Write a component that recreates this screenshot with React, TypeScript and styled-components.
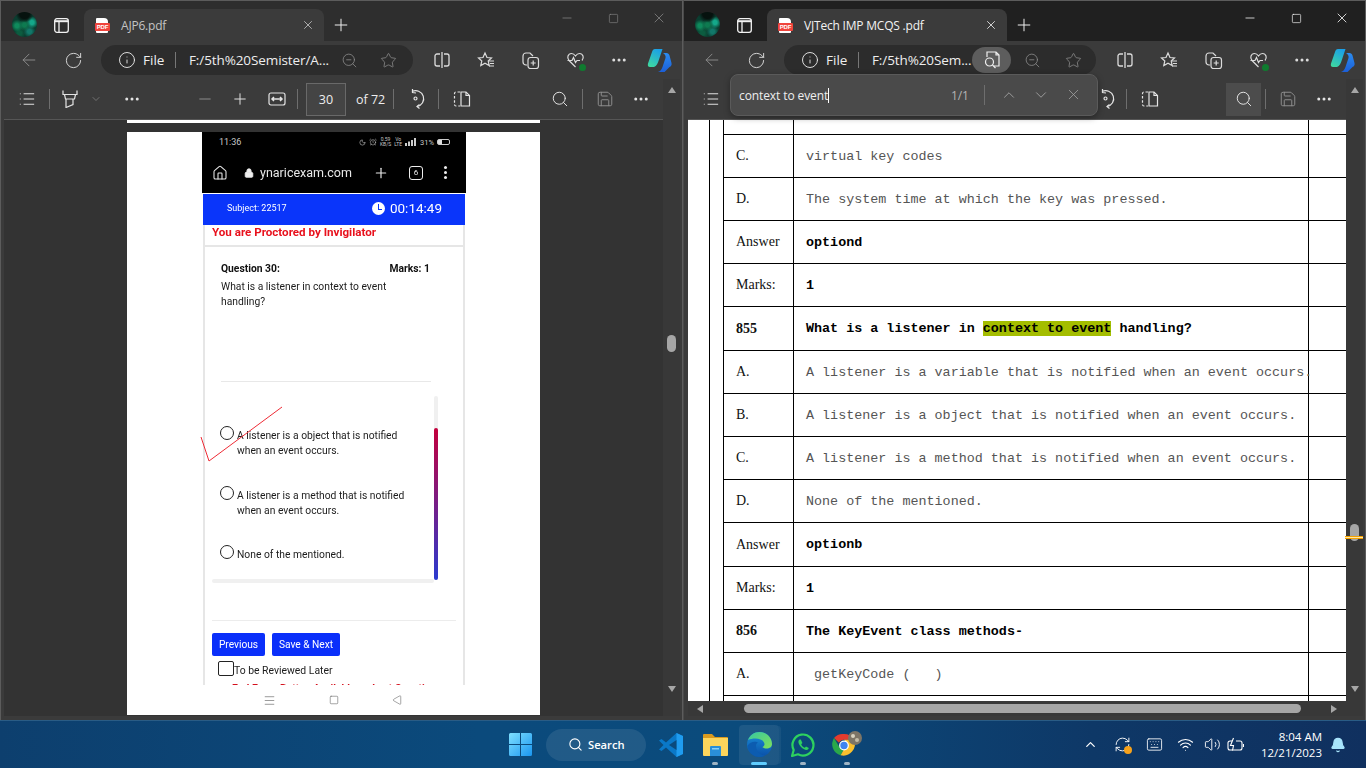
import React from "react";
import styled, { createGlobalStyle } from "styled-components";
import {
  AlarmClock, ArrowLeft, ChevronDown, ChevronUp, Home, Info, List, Lock, Menu, Minus, Moon, MoreHorizontal,
  Plus, RefreshCw, RotateCw, Save, Search, Square, Star, Triangle, Volume2, Wifi, X, ZoomOut, Bell, Keyboard,
} from "lucide-react";

const GlobalStyle = createGlobalStyle`
  html, body { margin: 0; padding: 0; width: 1366px; height: 768px; overflow: hidden; background: #333; }
  * { box-sizing: border-box; }
  body { font-family: "Open Sans", "Noto Sans", sans-serif; }
`;

const Desktop = styled.div`
  width: 1366px;
  height: 768px;
  display: flex;
  flex-direction: column;
`;

const Windows = styled.div`
  height: 720px;
  display: flex;
`;

const Window = styled.section<{ $active?: boolean }>`
  position: relative;
  width: 683px;
  height: 720px;
  display: flex;
  flex-direction: column;
  background: #3b3b3b;
  border: 1px solid #5c5c5c;
  border-bottom: 0;
  padding-bottom: 4px;
  ${(p) => (p.$active ? "border-left-color: #4a4a4a;" : "")}
`;

const TitleBar = styled.div<{ $active?: boolean }>`
  height: 40px;
  display: flex;
  align-items: flex-end;
  background: ${(p) => (p.$active ? "#202020" : "#2e2e2e")};
  flex-shrink: 0;
`;

const TitleSlot = styled.div<{ $w: number }>`
  width: ${(p) => p.$w}px;
  height: 32px;
  display: flex;
  align-items: center;
  justify-content: center;
  flex-shrink: 0;
`;

const Avatar = styled.div`
  width: 25px;
  height: 25px;
  border-radius: 50%;
  background:
    radial-gradient(circle at 50% 6%, #06120e 0 5px, transparent 9px),
    radial-gradient(circle at 50% 52%, #0e7a50 0 2px, transparent 6px),
    radial-gradient(circle at 20% 55%, #0f8a5c 0 2px, transparent 6px),
    radial-gradient(circle at 80% 42%, #14a88a 0 2px, transparent 6px),
    radial-gradient(circle at 70% 78%, #12786a 0 2px, transparent 6px),
    radial-gradient(circle at 30% 84%, #0c5c40 0 2px, transparent 6px),
    #0b3d30;
  margin-top: -1px;
`;

const Tab = styled.div<{ $active?: boolean }>`
  width: 240px;
  height: 32px;
  display: flex;
  align-items: center;
  background: #3b3b3b;
  border-radius: 8px 8px 0 0;
  padding-left: 11px;
  color: ${(p) => (p.$active ? "#f2f2f2" : "#c4c4c4")};
  font-size: 12px;
  letter-spacing: -0.2px;
  flex-shrink: 0;
`;

const TabTitle = styled.span`
  margin-left: 13px;
  flex: 1;
`;

const TabClose = styled.span`
  width: 32px;
  display: flex;
  justify-content: center;
`;

const PdfBadge = styled.span`
  position: relative;
  width: 12px;
  height: 15px;
  margin-left: 1px;
  background: #fff;
  border-radius: 1px 4px 1px 1px;
  display: block;
  &::after {
    content: "PDF";
    position: absolute;
    left: -1px;
    top: 5px;
    width: 15px;
    height: 8px;
    background: #f0443c;
    border-radius: 1px;
    color: #fff;
    font: 700 6px/8px "Liberation Sans", sans-serif;
    text-align: center;
  }
`;

const WindowControls = styled.div`
  margin-left: auto;
  display: flex;
  align-self: flex-start;
  margin-top: 9px;
`;

const ControlSlot = styled.div<{ $dim?: boolean }>`
  width: 46px;
  height: 16px;
  display: flex;
  align-items: center;
  justify-content: center;
  color: ${(p) => (p.$dim ? "#858585" : "#fff")};
`;

const Toolbar = styled.div`
  height: 38px;
  display: flex;
  align-items: center;
  flex-shrink: 0;
  padding-left: 6px;
  color: #dcdcdc;
`;

const Slot = styled.div<{ $w: number; $dim?: boolean }>`
  width: ${(p) => p.$w}px;
  height: 30px;
  flex-shrink: 0;
  display: flex;
  align-items: center;
  justify-content: center;
  position: relative;
  color: ${(p) => (p.$dim ? "#8e8e8e" : "inherit")};
`;

const AddressBar = styled.div`
  width: 312px;
  height: 30px;
  margin: 0 7px 0 6px;
  padding-left: 17px;
  border-radius: 15px;
  background: #2c2c2c;
  display: flex;
  align-items: center;
  flex-shrink: 0;
  color: #eee;
  font-size: 13.5px;
`;

const AddressFile = styled.span`
  width: 39px;
  padding-left: 7px;
  flex-shrink: 0;
`;

const AddressDivider = styled.span`
  width: 1px;
  height: 16px;
  background: #777;
  flex-shrink: 0;
  margin-right: 13px;
`;

const AddressUrl = styled.span<{ $w: number }>`
  width: ${(p) => p.$w}px;
  white-space: nowrap;
  flex-shrink: 0;
  letter-spacing: -0.1px;
`;

const ReadAloudButton = styled.span`
  width: 39px;
  height: 26px;
  border-radius: 13px;
  background: #5d5d5d;
  flex-shrink: 0;
  display: flex;
  align-items: center;
  justify-content: center;
`;

const HeartDot = styled.span`
  position: absolute;
  right: 11px;
  bottom: 4px;
  width: 7px;
  height: 7px;
  border-radius: 50%;
  background: #0f7b2f;
`;

const Main = styled.div<{ $active?: boolean }>`
  flex: 1;
  min-height: 0;
  display: flex;
  padding-left: ${(p) => (p.$active ? 4 : 3)}px;
  padding-right: 2px;
`;

const MainColumn = styled.div`
  flex: 1;
  min-width: 0;
  display: flex;
  flex-direction: column;
`;

const PdfToolbar = styled.div`
  height: 41px;
  flex-shrink: 0;
  display: flex;
  align-items: center;
  border-bottom: 1px solid #565656;
  color: #e4e4e4;
  font-size: 12.5px;
`;

const ToolSeparator = styled.span`
  width: 1px;
  height: 20px;
  background: #6e6e6e;
  flex-shrink: 0;
`;

const PageBox = styled.div`
  width: 40px;
  height: 33px;
  margin-left: 8px;
  border: 1px solid #696969;
  background: #444;
  color: #eee;
  display: flex;
  align-items: center;
  justify-content: center;
  flex-shrink: 0;
`;

const PageCount = styled.span`
  width: 47px;
  padding-left: 10px;
  white-space: nowrap;
  color: #eee;
  flex-shrink: 0;
`;

const ToolSpacer = styled.span`
  flex: 1;
`;

const ActiveTool = styled.div`
  width: 35px;
  height: 33px;
  background: #4c4c4c;
  display: flex;
  align-items: center;
  justify-content: center;
  flex-shrink: 0;
`;

const DarkPane = styled.div`
  flex: 1;
  min-height: 0;
  background: #333;
  overflow: hidden;
`;

const PrevPageEnd = styled.div`
  width: 413px;
  height: 3px;
  margin: 0 0 9px 123px;
  background: #fff;
`;

const Page = styled.div`
  position: relative;
  width: 413px;
  height: 583px;
  margin-left: 123px;
  background: #fff;
  padding-left: 75px;
`;

const Phone = styled.div`
  width: 264px;
  height: 583px;
  display: flex;
  flex-direction: column;
  font-family: Roboto, "Liberation Sans", sans-serif;
  filter: blur(0.35px);
`;

const PhoneStatus = styled.div`
  height: 20px;
  background: #000;
  color: #c8c8c8;
  display: flex;
  align-items: center;
  justify-content: space-between;
  padding: 0 16px 0 17px;
  font-size: 9px;
  flex-shrink: 0;
`;

const StatusIcons = styled.span`
  display: flex;
  align-items: center;
  gap: 3px;
  font-size: 7.5px;
  white-space: nowrap;
`;

const NetSpeed = styled.span`
  font-size: 5px;
  line-height: 5px;
  text-align: center;
`;

const BatteryPill = styled.span`
  width: 13px;
  height: 6px;
  border: 1px solid #ccc;
  border-radius: 2px;
  background: linear-gradient(90deg, #ddd 35%, transparent 35%);
`;

const PhoneUrlBar = styled.div`
  height: 41px;
  background: #000;
  color: #e8e8e8;
  display: flex;
  align-items: center;
  font-size: 12.5px;
  flex-shrink: 0;
  padding-left: 10px;
`;

const PhoneHome = styled.span`
  width: 30px;
  line-height: 0;
`;

const PhoneUrlText = styled.span`
  width: 113px;
  padding-left: 4px;
  white-space: nowrap;
`;

const TabCount = styled.span`
  width: 14px;
  height: 14px;
  margin-left: 16px;
  border: 1.5px solid #eee;
  border-radius: 3px;
  font-size: 8px;
  display: flex;
  align-items: center;
  justify-content: center;
`;

const PhoneDots = styled.span`
  margin-left: 21px;
  width: 3px;
  height: 3px;
  border-radius: 50%;
  background: #eee;
  box-shadow: 0 -5px 0 #eee, 0 5px 0 #eee;
`;

const ExamBar = styled.div`
  height: 31px;
  margin: 1px 1px 0;
  background: #0a35fa;
  color: #fff;
  display: flex;
  align-items: center;
  padding: 0 0 3px 24px;
  font-size: 9px;
  flex-shrink: 0;
`;

const Timer = styled.span`
  margin-left: auto;
  margin-right: 23px;
  display: flex;
  align-items: center;
  gap: 5px;
  font-size: 13.5px;
`;

const ClockFace = styled.span`
  width: 13px;
  height: 13px;
  border-radius: 50%;
  background: #fff;
  position: relative;
  &::after {
    content: "";
    position: absolute;
    left: 6px;
    top: 2px;
    width: 3px;
    height: 5px;
    border-left: 1.5px solid #0a35fa;
    border-bottom: 1.5px solid #0a35fa;
  }
`;

const ProctorLine = styled.div`
  height: 20px;
  margin: 0 1px;
  padding-left: 7px;
  color: #e8101c;
  font-size: 11.6px;
  font-weight: 700;
  line-height: 15px;
  border-left: 2px solid #e6e6e6;
  border-right: 2px solid #e6e6e6;
  white-space: nowrap;
  flex-shrink: 0;
`;

const ExamCard = styled.div`
  height: 440px;
  margin: 0 1px;
  border: 2px solid #e6e6e6;
  border-bottom: 0;
  overflow: hidden;
  flex-shrink: 0;
  color: #1c1c1c;
`;

const QuestionBlock = styled.div`
  height: 135px;
  margin: 0 32px 0 16px;
  padding-top: 14px;
  border-bottom: 1px solid #e8e8e8;
  font-size: 10.3px;
  line-height: 15px;
`;

const QuestionHead = styled.div`
  display: flex;
  justify-content: space-between;
  font-weight: 700;
  color: #111;
  margin-bottom: 3px;
  padding-right: 1px;
`;

const OptionsArea = styled.div`
  margin: 14px 0 0 7px;
  height: 187px;
  display: flex;
`;

const OptionsColumn = styled.div`
  width: 222px;
  display: flex;
  flex-direction: column;
  padding-top: 32px;
`;

const OptionRow = styled.div`
  display: flex;
  font-size: 10.3px;
  line-height: 15px;
  padding-left: 8px;
  flex-shrink: 0;
  & + & {
    margin-top: 29.5px;
  }
`;

const Radio = styled.span`
  width: 14px;
  height: 14px;
  margin: -2px 3px 0 0;
  border: 1.2px solid #222;
  border-radius: 50%;
  flex-shrink: 0;
`;

const OptionsHBar = styled.div`
  height: 4px;
  margin-top: auto;
  background: #f0f0f0;
  border-radius: 2px;
  flex-shrink: 0;
`;

const OptionsVBar = styled.div`
  width: 4px;
  height: 184px;
  border-radius: 2px;
  background: #f0f0f0;
  display: flex;
  flex-direction: column;
  justify-content: flex-end;
`;

const OptionsVThumb = styled.div`
  height: 152px;
  border-radius: 2px;
  background: linear-gradient(#c4003c, #2a3bd0);
`;

const CardDivider = styled.div`
  height: 1px;
  margin: 37px 7px 0 7px;
  background: #ececec;
`;

const ButtonRow = styled.div`
  display: flex;
  gap: 7px;
  margin: 12px 0 0 7px;
`;

const ExamButton = styled.span<{ $w: number }>`
  width: ${(p) => p.$w}px;
  height: 23px;
  background: #0a2ffa;
  color: #fff;
  border-radius: 2px;
  font-size: 10.2px;
  display: flex;
  align-items: center;
  justify-content: center;
`;

const ReviewRow = styled.div`
  display: flex;
  align-items: flex-end;
  margin: 5px 0 0 13px;
  font-size: 10.4px;
  line-height: 10px;
`;

const ReviewBox = styled.span`
  width: 16px;
  height: 15px;
  border: 1.3px solid #222;
  border-radius: 2px;
`;

const EndNote = styled.div`
  margin: 6px 0 0 27px;
  color: #d4101c;
  font-size: 10.3px;
  font-weight: 700;
  white-space: nowrap;
`;

const PhoneNav = styled.div`
  height: 30px;
  display: flex;
  align-items: center;
  gap: 53px;
  padding-left: 61px;
  color: #666;
  flex-shrink: 0;
`;

const BackKey = styled.span`
  line-height: 0;
  transform: rotate(-90deg);
`;

const TickMark = styled.svg`
  position: absolute;
  left: 70px;
  top: 270px;
  width: 90px;
  height: 65px;
  pointer-events: none;
`;

const VScroll = styled.div`
  width: 17px;
  flex-shrink: 0;
  background: #383838;
  display: flex;
  flex-direction: column;
  align-items: center;
  padding-top: 8px;
  position: relative;
`;

const ScrollArrow = styled.span<{ $dir: "up" | "down" | "left" | "right" }>`
  display: block;
  width: 0;
  height: 0;
  flex-shrink: 0;
  ${(p) =>
    p.$dir === "up" || p.$dir === "down"
      ? `border-left: 4.5px solid transparent; border-right: 4.5px solid transparent;
         border-${p.$dir === "up" ? "bottom" : "top"}: 6px solid #a6a6a6;`
      : `border-top: 4.5px solid transparent; border-bottom: 4.5px solid transparent;
         border-${p.$dir === "left" ? "right" : "left"}: 6px solid #a6a6a6;`}
`;

const ScrollThumb = styled.div<{ $top: number }>`
  width: 9px;
  height: 17px;
  margin-top: ${(p) => p.$top}px;
  margin-bottom: auto;
  background: #a6a6a6;
  border-radius: 5px;
  flex-shrink: 0;
`;

const DownSpot = styled.div`
  margin-bottom: 24px;
  line-height: 0;
`;

const FindMarker = styled.div`
  position: absolute;
  left: -1px;
  right: 0;
  top: 457px;
  height: 3px;
  border-top: 1px solid #f5a100;
  border-bottom: 1px solid #f5a100;
  background: #ffe9a8;
`;

const PdfView = styled.div`
  flex: 1;
  min-height: 0;
  background: #fff;
  overflow: hidden;
  display: flex;
  padding-left: 21px;
`;

const OuterRule = styled.div`
  width: 14px;
  flex-shrink: 0;
  border-left: 1px solid #000;
`;

const QuestionTable = styled.div`
  flex: 1;
  min-width: 0;
  border-left: 1px solid #000;
`;

const TableRow = styled.div<{ $h: number }>`
  height: ${(p) => p.$h}px;
  display: grid;
  grid-template-columns: 69px 516px 1fr;
  border-bottom: 1px solid #000;
`;

const LabelCell = styled.div<{ $bold?: boolean }>`
  padding-left: 12px;
  display: flex;
  align-items: center;
  font-family: "Liberation Serif", serif;
  font-size: 14px;
  font-weight: ${(p) => (p.$bold ? 700 : 400)};
  color: #111;
`;

const TextCell = styled.div<{ $bold?: boolean }>`
  border-left: 1px solid #000;
  border-right: 1px solid #000;
  padding-left: 12px;
  display: flex;
  align-items: center;
  font-family: "Liberation Mono", monospace;
  font-size: 13.4px;
  white-space: pre;
  font-weight: ${(p) => (p.$bold ? 700 : 400)};
  color: ${(p) => (p.$bold ? "#000" : "#555")};
`;

const Match = styled.mark`
  background: #a4bd00;
  color: #000;
`;

const HScroll = styled.div`
  height: 15px;
  flex-shrink: 0;
  background: #383838;
  display: flex;
  align-items: center;
  padding-left: 9px;
`;

const HThumb = styled.div`
  width: 557px;
  height: 9px;
  margin-left: 41px;
  border-radius: 5px;
  background: #a6a6a6;
`;

const HArrowRight = styled.div`
  margin-left: 30px;
  line-height: 0;
`;

const FindBar = styled.div`
  position: absolute;
  left: 46px;
  top: 73px;
  width: 368px;
  height: 42px;
  background: #4a4a4a;
  border: 1px solid #5a5a5a;
  border-radius: 8px;
  box-shadow: 0 2px 6px rgba(0, 0, 0, 0.35);
  display: flex;
  align-items: center;
  color: #eee;
  font-size: 12px;
  letter-spacing: -0.1px;
  padding-left: 8px;
  z-index: 2;
`;

const FindInput = styled.span`
  width: 212px;
  white-space: nowrap;
`;

const Caret = styled.span`
  display: inline-block;
  width: 1px;
  height: 15px;
  background: #fff;
  vertical-align: -3px;
`;

const FindCount = styled.span`
  width: 33px;
  color: #b4b4b4;
`;

const FindActions = styled.span`
  margin-left: 8px;
  display: flex;
`;

const FindAction = styled.span`
  width: 32px;
  display: flex;
  justify-content: center;
  color: #a4a4a4;
`;

const Taskbar = styled.footer`
  height: 48px;
  display: flex;
  align-items: center;
  background: linear-gradient(90deg, #0d3f6e 0%, #0b4a7c 35%, #0b4b7c 55%, #0e3867 80%, #10305f 100%);
  border-top: 1px solid #2a5c85;
  padding-left: 509px;
  color: #fff;
  flex-shrink: 0;
`;

const SearchPill = styled.div`
  width: 100px;
  height: 32px;
  margin: 0 3px 0 14px;
  border-radius: 16px;
  background: rgba(255, 255, 255, 0.09);
  display: flex;
  align-items: center;
  gap: 5px;
  padding-left: 22px;
  font-size: 11.2px;
  font-weight: 600;
`;

const AppSlot = styled.div<{ $w: number; $active?: boolean }>`
  position: relative;
  width: ${(p) => p.$w}px;
  height: 40px;
  display: flex;
  align-items: center;
  justify-content: center;
  flex-shrink: 0;
  border-radius: 4px;
  ${(p) => (p.$active ? "margin: 0 2px; background: rgba(255,255,255,0.08); box-shadow: 3px 0 0 -1px rgba(255,255,255,0.05);" : "")}
`;

const RunDot = styled.span<{ $active?: boolean }>`
  position: absolute;
  bottom: 0;
  left: 50%;
  transform: translateX(-50%);
  width: ${(p) => (p.$active ? 16 : 6)}px;
  height: 3px;
  border-radius: 2px;
  background: ${(p) => (p.$active ? "#60cdff" : "#9fb4c4")};
`;

const Tray = styled.div`
  margin-left: auto;
  display: flex;
  align-items: center;
  height: 100%;
`;

const TraySlot = styled.div<{ $w: number }>`
  position: relative;
  width: ${(p) => p.$w}px;
  display: flex;
  justify-content: center;
  flex-shrink: 0;
`;

const OrangeDot = styled.span`
  position: absolute;
  right: 6px;
  bottom: -1px;
  width: 8px;
  height: 8px;
  border-radius: 50%;
  background: #f7a21b;
`;

const Clock = styled.div`
  width: 74px;
  text-align: right;
  font-size: 11.5px;
  line-height: 16px;
  white-space: nowrap;
`;

const icon = { size: 18, strokeWidth: 1.3 };

const CopilotLogo = () => (
  <svg width="25" height="25" viewBox="0 0 25 25">
    <defs>
      <linearGradient id="cpA" x1="0.7" y1="0" x2="0.2" y2="1">
        <stop offset="0" stopColor="#1a9fe8" />
        <stop offset="1" stopColor="#3ed8a0" />
      </linearGradient>
      <linearGradient id="cpB" x1="0.5" y1="0" x2="0.5" y2="1">
        <stop offset="0" stopColor="#2b8cf0" />
        <stop offset="1" stopColor="#1c5fd8" />
      </linearGradient>
    </defs>
    <path d="M8 1h7.500l-4 12c-.8 2.500-1.800 5-4.500 6H3C1 19 .5 17.500 1 15.500L5 4c.5-2 1.500-3 3-3z" fill="url(#cpA)" />
    <path d="M16 5h3.500c1.500 0 2.500 1 3 2.500L24.500 15c.5 2-.5 3.500-2 4l-5 5H11c2.500-.5 3.500-2.500 4.500-5l3-9c.5-2-.5-4-2.500-5z" fill="url(#cpB)" />
  </svg>
);

const Rotate = () => (
  <svg width="20" height="22" viewBox="0 0 20 22" fill="none" stroke="currentColor" strokeWidth="1.2">
    <path d="M6 3.500A8 8 0 1 1 11 18.500" />
    <path d="M6.500 1v3.500L10 5" />
    <path d="M13.500 20.500L11 18.500l2.500-2" />
    <circle cx="9.500" cy="10.500" r="1.500" />
  </svg>
);

const PageLayout = () => (
  <svg width="18" height="16" viewBox="0 0 18 16" fill="none" stroke="currentColor" strokeWidth="1.2">
    <path d="M7 1H3a1.500 1.500 0 0 0-1.500 1.500v11A1.500 1.500 0 0 0 3 15h4" strokeDasharray="2.500 1.800" />
    <path d="M8 1h5l3.500 3.500V15H8z" />
    <path d="M13 1v3.500h3.500" />
  </svg>
);

const FitWidth = () => (
  <svg width="18" height="14" viewBox="0 0 18 14" fill="none" stroke="currentColor" strokeWidth="1.2">
    <rect x="1" y="1" width="16" height="12" rx="2" />
    <path d="M4 7h10M6 5L4 7l2 2M12 5l2 2-2 2" strokeWidth="1.500" />
  </svg>
);

const HighlighterMark = () => (
  <svg width="16" height="18" viewBox="0 0 16 18" fill="none" stroke="currentColor" strokeWidth="1.200">
    <path d="M1 .5v4h14v-4" />
    <path d="M2.500 4.500l1 4.500h9l1-4.500" />
    <path d="M4 9v8.500l7-3V9" />
  </svg>
);

const TabActions = () => (
  <svg width="15" height="15" viewBox="0 0 15 15" fill="none" stroke="#f2f2f2" strokeWidth="1.300">
    <rect x="0.700" y="0.700" width="13.600" height="13.600" rx="2.200" />
    <path d="M0.700 3.200h13.600" strokeWidth="2" />
    <path d="M5 3.500v10.800" />
  </svg>
);

const SplitScreen = () => (
  <svg width="18" height="18" viewBox="0 0 18 18" fill="none" stroke="currentColor" strokeWidth="1.300">
    <path d="M7 3H4a2 2 0 0 0-2 2v8a2 2 0 0 0 2 2h3M11 3h3a2 2 0 0 1 2 2v8a2 2 0 0 1-2 2h-3M9 1v16" />
  </svg>
);

const Favorites = () => (
  <svg width="18" height="18" viewBox="0 0 18 18" fill="none" stroke="currentColor" strokeWidth="1.200">
    <path d="M8 2l2 4.500 4.500.5-3.300 3 1 4.500L8 12.200 3.800 14.500l1-4.500L1.500 7 6 6.500z" />
    <path d="M12 10h5M13 12.500h4M12 15h5" />
  </svg>
);

const Collections = () => (
  <svg width="19" height="19" viewBox="0 0 19 19" fill="none" stroke="currentColor" strokeWidth="1.200">
    <path d="M6 14H5a3 3 0 0 1-3-3V5a3 3 0 0 1 3-3h4l3 3" />
    <rect x="7" y="6.500" width="10.500" height="11" rx="2.500" />
    <path d="M12.200 9.500v5M9.700 12h5" />
  </svg>
);

const HeartPulseIcon = () => (
  <svg width="19" height="18" viewBox="0 0 19 18" fill="none" stroke="currentColor" strokeWidth="1.200">
    <path d="M9.500 16L3 9.500C.5 7 2 2.500 5.500 2.500c2 0 3 1 4 2.500 1-1.500 2-2.500 4-2.500 3.500 0 5 4.500 2.500 7" />
    <path d="M1.500 9.500H6l1.500-3 2 5 1.500-2h3" />
  </svg>
);

const ReadAloudPage = () => (
  <svg width="18" height="20" viewBox="0 0 18 20" fill="none" stroke="#eee" strokeWidth="1.200">
    <path d="M8 2h5l3 3v11h-5M13 2v3h3" />
    <path d="M8 2H4v5" />
    <circle cx="6.500" cy="12" r="4" />
    <path d="M9.500 15l3 3" />
  </svg>
);

const SignalBars = () => (
  <svg width="12" height="8" viewBox="0 0 12 8" fill="#ccc">
    <path d="M0 5h2v3H0zM3 3.500h2V8H3zM6 2h2v6H6zM9 0h2v8H9z" />
  </svg>
);

const WindowsLogo = () => (
  <svg width="23" height="23" viewBox="0 0 23 23">
    <defs>
      <linearGradient id="win" x1="0" y1="0" x2="1" y2="1">
        <stop offset="0" stopColor="#7fe0ff" />
        <stop offset="1" stopColor="#1a96f0" />
      </linearGradient>
    </defs>
    <path d="M1.500 0H11v11H0V1.500A1.500 1.500 0 0 1 1.500 0zM12 0h9.500A1.500 1.500 0 0 1 23 1.500V11H12zM0 12h11v11H1.500A1.500 1.500 0 0 1 0 21.500zM12 12h11v9.500a1.500 1.500 0 0 1-1.500 1.500H12z" fill="url(#win)" />
  </svg>
);

const VsCodeLogo = () => (
  <svg width="24" height="24" viewBox="0 0 24 24">
    <path d="M17.500 0L24 3v18l-6.500 3L7 14.500 2.500 18 0 16.500 4.500 12 0 7.500 2.500 6 7 9.500z" fill="#0a78c8" />
    <path d="M17.500 0L24 3v18l-6.500 3z" fill="#1f9cf0" />
    <path d="M17.500 7L10 12l7.500 5z" fill="#0b4a7c" />
  </svg>
);

const FolderLogo = () => (
  <svg width="25" height="22" viewBox="0 0 25 22">
    <path d="M1 0h8l3 3h12a1 1 0 0 1 1 1v3H0V1a1 1 0 0 1 1-1z" fill="#d99a1f" />
    <path d="M0 4h25v17a1 1 0 0 1-1 1H1a1 1 0 0 1-1-1z" fill="#fcd55c" />
    <path d="M7 13a1 1 0 0 1 1-1h9a1 1 0 0 1 1 1v9H7z" fill="#2a8fd8" />
    <path d="M9 14h7v1.500H9z" fill="#8cd0f5" />
  </svg>
);

const EdgeLogo = () => (
  <svg width="25" height="25" viewBox="0 0 25 25">
    <defs>
      <linearGradient id="edA" x1="0" y1="0" x2="1" y2="1">
        <stop offset="0" stopColor="#37c7a0" />
        <stop offset="1" stopColor="#7fe05a" />
      </linearGradient>
      <linearGradient id="edB" x1="0" y1="0" x2="0" y2="1">
        <stop offset="0" stopColor="#1a8fd8" />
        <stop offset="1" stopColor="#0a4fa8" />
      </linearGradient>
    </defs>
    <circle cx="12.500" cy="12.500" r="12.500" fill="url(#edB)" />
    <path d="M1 8C3 3 7 0 12.500 0 19 0 25 5 25 12c0 3-2.500 4.500-5.500 4.500-2 0-3.500-.6-4-1.500 2-1 2.500-2.500 1.500-4.500C15.500 7.500 12 6.500 8.500 6.500 5.500 6.500 3 7 1 8z" fill="url(#edA)" />
    <path d="M9 14c0 5 4 9 9 9.500-2 1-3.500 1.500-5.500 1.500C6 25 1 20 0.500 14 3 9 9 9 11 10.500 9.500 11.500 9 12.500 9 14z" fill="#0c5cb0" />
  </svg>
);

const WhatsAppLogo = () => (
  <svg width="24" height="24" viewBox="0 0 24 24" fill="none">
    <path d="M1 23l1.700-6A10.500 10.500 0 1 1 7 21.300z" stroke="#2ed15f" strokeWidth="2.200" strokeLinejoin="round" />
    <path d="M8.500 6.500c-1.500 1-1.500 3 0 5.500s4 4.500 6.500 5c1.500.2 2.500-.8 2.800-2l-2.800-1.500-1.200 1.300c-1.500-.5-3-2-3.600-3.600l1.200-1.200L9.800 6.500z" fill="#2ed15f" />
  </svg>
);

const ChromeLogo = () => (
  <svg width="32" height="28" viewBox="0 0 32 28">
    <path d="M13 3a11.500 11.500 0 0 1 10 5.750H13a5.750 5.750 0 0 0-5 2.900L3 6.900A11.500 11.500 0 0 1 13 3z" fill="#e33b2e" />
    <path d="M3 6.900l5 8.600a5.750 5.750 0 0 0 5 2.750l-3.400 6A11.500 11.500 0 0 1 3 6.900z" fill="#2aa84a" />
    <path d="M23 8.750a11.500 11.500 0 0 1-13.400 15.500l5-8.800a5.750 5.750 0 0 0-1.600-6.700z" fill="#fbc02d" />
    <circle cx="13" cy="14.500" r="4.300" fill="#3f83f0" stroke="#fff" strokeWidth="1.200" />
    <circle cx="24" cy="7" r="7" fill="#7d7566" />
    <circle cx="22" cy="5" r="2" fill="#d8d2c0" />
    <circle cx="26" cy="9" r="2" fill="#c5bda8" />
  </svg>
);

const BatteryBolt = () => (
  <svg width="17" height="16" viewBox="0 0 17 16" fill="none" stroke="#fff" strokeWidth="1.100">
    <path d="M5 4H3a2 2 0 0 0-2 2v5a2 2 0 0 0 2 2h10a2 2 0 0 0 2-2V6a2 2 0 0 0-2-2H9" />
    <path d="M16.500 7v3" />
    <path d="M6.500 1L3.500 8.500h3l-1 5" />
  </svg>
);

type Row = { label?: string; text?: React.ReactNode; strong?: boolean; boldLabel?: boolean; h: number };

const rows: Row[] = [
  { h: 15 },
  { label: "C.", text: "virtual key codes", h: 43 },
  { label: "D.", text: "The system time at which the key was pressed.", h: 43 },
  { label: "Answer", text: "optiond", strong: true, h: 43 },
  { label: "Marks:", text: "1", strong: true, h: 43 },
  {
    label: "855",
    text: (
      <span>
        What is a listener in <Match>context to event</Match> handling?
      </span>
    ),
    strong: true,
    boldLabel: true,
    h: 44,
  },
  { label: "A.", text: "A listener is a variable that is notified when an event occurs.", h: 43 },
  { label: "B.", text: "A listener is a object that is notified when an event occurs.", h: 43 },
  { label: "C.", text: "A listener is a method that is notified when an event occurs.", h: 43 },
  { label: "D.", text: "None of the mentioned.", h: 43 },
  { label: "Answer", text: "optionb", strong: true, h: 44 },
  { label: "Marks:", text: "1", strong: true, h: 43 },
  { label: "856", text: "The KeyEvent class methods-", strong: true, boldLabel: true, h: 43 },
  { label: "A.", text: " getKeyCode (   )", h: 43 },
  { h: 43 },
];

const TabRow = ({ title, active }: { title: string; active?: boolean }) => (
  <TitleBar $active={active}>
    <TitleSlot $w={47}>
      <Avatar />
    </TitleSlot>
    <TitleSlot $w={27}>
      <TabActions />
    </TitleSlot>
    <TitleSlot $w={9} />
    <Tab $active={active}>
      <PdfBadge />
      <TabTitle>{title}</TabTitle>
      <TabClose>
        <X size={14} strokeWidth={1.4} />
      </TabClose>
    </Tab>
    <TitleSlot $w={34}>
      <Plus size={20} strokeWidth={1.2} color="#eee" />
    </TitleSlot>
    <WindowControls>
      <ControlSlot $dim={!active}>
        <Minus size={14} strokeWidth={1.3} />
      </ControlSlot>
      <ControlSlot $dim={!active}>
        <Square size={11} strokeWidth={1.4} />
      </ControlSlot>
      <ControlSlot $dim={!active}>
        <X size={16} strokeWidth={1.2} />
      </ControlSlot>
    </WindowControls>
  </TitleBar>
);

const BrowserToolbar = ({ url, urlWidth, reader }: { url: string; urlWidth: number; reader?: boolean }) => (
  <Toolbar>
    <Slot $w={44} $dim>
      <ArrowLeft size={20} strokeWidth={1.1} />
    </Slot>
    <Slot $w={44}>
      <RotateCw size={19} strokeWidth={1.2} />
    </Slot>
    <AddressBar>
      <Info size={18} strokeWidth={1.2} />
      <AddressFile>File</AddressFile>
      <AddressDivider />
      <AddressUrl $w={urlWidth}>{url}</AddressUrl>
      {reader && (
        <ReadAloudButton>
          <ReadAloudPage />
        </ReadAloudButton>
      )}
      <Slot $w={reader ? 42 : 38} $dim>
        <ZoomOut size={17} strokeWidth={1.1} />
      </Slot>
      <Slot $w={40} $dim>
        <Star size={17} strokeWidth={1.1} />
      </Slot>
    </AddressBar>
    <Slot $w={44}>
      <SplitScreen />
    </Slot>
    <Slot $w={44}>
      <Favorites />
    </Slot>
    <Slot $w={45}>
      <Collections />
    </Slot>
    <Slot $w={44}>
      <HeartPulseIcon />
      <HeartDot />
    </Slot>
    <Slot $w={43}>
      <MoreHorizontal size={18} strokeWidth={2} />
    </Slot>
    <Slot $w={38}>
      <CopilotLogo />
    </Slot>
  </Toolbar>
);

const LeftWindow = () => (
  <Window>
    <TabRow title="AJP6.pdf" />
    <BrowserToolbar url="F:/5th%20Semister/A..." urlWidth={141} />
    <Main>
      <MainColumn>
        <PdfToolbar>
          <Slot $w={45}>
            <List {...icon} />
          </Slot>
          <ToolSeparator />
          <Slot $w={40}>
            <HighlighterMark />
          </Slot>
          <Slot $w={12} $dim>
            <ChevronDown size={12} strokeWidth={1.3} />
          </Slot>
          <Slot $w={60}>
            <MoreHorizontal size={18} strokeWidth={2} />
          </Slot>
          <Slot $w={25} />
          <Slot $w={36} $dim>
            <Minus {...icon} />
          </Slot>
          <Slot $w={34}>
            <Plus {...icon} />
          </Slot>
          <Slot $w={40}>
            <FitWidth />
          </Slot>
          <ToolSeparator />
          <PageBox>30</PageBox>
          <PageCount>of 72</PageCount>
          <ToolSeparator />
          <Slot $w={44}>
            <Rotate />
          </Slot>
          <ToolSeparator />
          <Slot $w={46}>
            <PageLayout />
          </Slot>
          <ToolSpacer />
          <Slot $w={36}>
            <Search {...icon} />
          </Slot>
          <Slot $w={4} />
          <ToolSeparator />
          <Slot $w={44} $dim>
            <Save {...icon} />
          </Slot>
          <Slot $w={28}>
            <MoreHorizontal size={18} strokeWidth={2} />
          </Slot>
          <Slot $w={8} />
        </PdfToolbar>
        <DarkPane>
          <PrevPageEnd />
          <Page>
            <Phone>
              <PhoneStatus>
                <span>11:36</span>
                <StatusIcons>
                  <Moon size={7} strokeWidth={2} />
                  <AlarmClock size={8} strokeWidth={1.6} />
                  <NetSpeed>
                    0.59
                    <br />
                    KB/S
                  </NetSpeed>
                  <NetSpeed>
                    Vo
                    <br />
                    LTE
                  </NetSpeed>
                  <SignalBars />
                  31%
                  <BatteryPill />
                </StatusIcons>
              </PhoneStatus>
              <PhoneUrlBar>
                <PhoneHome>
                  <Home size={16} strokeWidth={1.6} />
                </PhoneHome>
                <Slot $w={14}>
                  <Lock size={10} strokeWidth={2.4} fill="#eee" />
                </Slot>
                <PhoneUrlText>ynaricexam.com</PhoneUrlText>
                <Slot $w={24}>
                  <Plus size={16} strokeWidth={1.8} />
                </Slot>
                <TabCount>6</TabCount>
                <PhoneDots />
              </PhoneUrlBar>
              <ExamBar>
                <span>Subject: 22517</span>
                <Timer>
                  <ClockFace />
                  00:14:49
                </Timer>
              </ExamBar>
              <ProctorLine>You are Proctored by Invigilator</ProctorLine>
              <ExamCard>
                <QuestionBlock>
                  <QuestionHead>
                    <span>Question 30:</span>
                    <span>Marks: 1</span>
                  </QuestionHead>
                  What is a listener in context to event
                  <br />
                  handling?
                </QuestionBlock>
                <OptionsArea>
                  <OptionsColumn>
                    <OptionRow>
                      <Radio />
                      <span>
                        A listener is a object that is notified
                        <br />
                        when an event occurs.
                      </span>
                    </OptionRow>
                    <OptionRow>
                      <Radio />
                      <span>
                        A listener is a method that is notified
                        <br />
                        when an event occurs.
                      </span>
                    </OptionRow>
                    <OptionRow>
                      <Radio />
                      <span>None of the mentioned.</span>
                    </OptionRow>
                    <OptionsHBar />
                  </OptionsColumn>
                  <OptionsVBar>
                    <OptionsVThumb />
                  </OptionsVBar>
                </OptionsArea>
                <CardDivider />
                <ButtonRow>
                  <ExamButton $w={53}>Previous</ExamButton>
                  <ExamButton $w={68}>Save &amp; Next</ExamButton>
                </ButtonRow>
                <ReviewRow>
                  <ReviewBox />
                  To be Reviewed Later
                </ReviewRow>
                <EndNote>End Exam Button Available on Last Question</EndNote>
              </ExamCard>
              <PhoneNav>
                <Menu size={13} strokeWidth={1.2} />
                <Square size={10} strokeWidth={1.4} />
                <BackKey>
                  <Triangle size={10} strokeWidth={1.4} />
                </BackKey>
              </PhoneNav>
            </Phone>
            <TickMark viewBox="0 0 90 65" fill="none" stroke="#ee2b35" strokeWidth="1">
              <path d="M4 35L12 59 85 5" />
            </TickMark>
          </Page>
        </DarkPane>
      </MainColumn>
      <VScroll>
        <ScrollArrow $dir="up" />
        <ScrollThumb $top={242} />
        <DownSpot>
          <ScrollArrow $dir="down" />
        </DownSpot>
      </VScroll>
    </Main>
  </Window>
);

const RightWindow = () => (
  <Window $active>
    <TabRow title="VJTech IMP MCQS .pdf" active />
    <BrowserToolbar url="F:/5th%20Sem..." urlWidth={100} reader />
    <Main $active>
      <MainColumn>
        <PdfToolbar>
          <Slot $w={45}>
            <List {...icon} />
          </Slot>
          <ToolSpacer />
          <Slot $w={40}>
            <Rotate />
          </Slot>
          <ToolSeparator />
          <Slot $w={45}>
            <PageLayout />
          </Slot>
          <Slot $w={54} />
          <ActiveTool>
            <Search {...icon} />
          </ActiveTool>
          <Slot $w={4} />
          <ToolSeparator />
          <Slot $w={44} $dim>
            <Save {...icon} />
          </Slot>
          <Slot $w={28}>
            <MoreHorizontal size={18} strokeWidth={2} />
          </Slot>
          <Slot $w={8} />
        </PdfToolbar>
        <PdfView>
          <OuterRule />
          <QuestionTable>
            {rows.map((row, index) => (
              <TableRow key={index} $h={row.h}>
                <LabelCell $bold={row.boldLabel}>{row.label}</LabelCell>
                <TextCell $bold={row.strong}>{row.text}</TextCell>
                <div />
              </TableRow>
            ))}
          </QuestionTable>
        </PdfView>
        <HScroll>
          <ScrollArrow $dir="left" />
          <HThumb />
          <HArrowRight>
            <ScrollArrow $dir="right" />
          </HArrowRight>
        </HScroll>
      </MainColumn>
      <VScroll>
        <ScrollArrow $dir="up" />
        <ScrollThumb $top={431} />
        <FindMarker />
        <DownSpot>
          <ScrollArrow $dir="down" />
        </DownSpot>
      </VScroll>
    </Main>
    <FindBar>
      <FindInput>
        context to event
        <Caret />
      </FindInput>
      <FindCount>1/1</FindCount>
      <ToolSeparator />
      <FindActions>
        <FindAction>
          <ChevronUp size={18} strokeWidth={1.2} />
        </FindAction>
        <FindAction>
          <ChevronDown size={18} strokeWidth={1.2} />
        </FindAction>
        <FindAction>
          <X size={17} strokeWidth={1.1} />
        </FindAction>
      </FindActions>
    </FindBar>
  </Window>
);

const App = () => (
  <Desktop>
    <GlobalStyle />
    <Windows>
      <LeftWindow />
      <RightWindow />
    </Windows>
    <Taskbar>
      <WindowsLogo />
      <SearchPill>
        <Search size={15} strokeWidth={1.8} />
        Search
      </SearchPill>
      <AppSlot $w={44}>
        <VsCodeLogo />
      </AppSlot>
      <AppSlot $w={44}>
        <FolderLogo />
        <RunDot />
      </AppSlot>
      <AppSlot $w={40} $active>
        <EdgeLogo />
        <RunDot $active />
      </AppSlot>
      <AppSlot $w={44}>
        <WhatsAppLogo />
        <RunDot />
      </AppSlot>
      <AppSlot $w={44}>
        <ChromeLogo />
        <RunDot />
      </AppSlot>
      <Tray>
        <TraySlot $w={32}>
          <ChevronUp size={15} strokeWidth={2} />
        </TraySlot>
        <TraySlot $w={32}>
          <RefreshCw size={17} strokeWidth={1.3} />
          <OrangeDot />
        </TraySlot>
        <TraySlot $w={32}>
          <Keyboard size={17} strokeWidth={1.2} />
        </TraySlot>
        <TraySlot $w={31}>
          <Wifi size={17} strokeWidth={1.5} />
        </TraySlot>
        <TraySlot $w={22}>
          <Volume2 size={17} strokeWidth={1.3} />
        </TraySlot>
        <TraySlot $w={25}>
          <BatteryBolt />
        </TraySlot>
        <Clock>
          8:04 AM
          <br />
          12/21/2023
        </Clock>
        <TraySlot $w={32}>
          <Bell size={16} fill="#a8e4fb" color="#a8e4fb" />
        </TraySlot>
        <TraySlot $w={12} />
      </Tray>
    </Taskbar>
  </Desktop>
);

export default App;
